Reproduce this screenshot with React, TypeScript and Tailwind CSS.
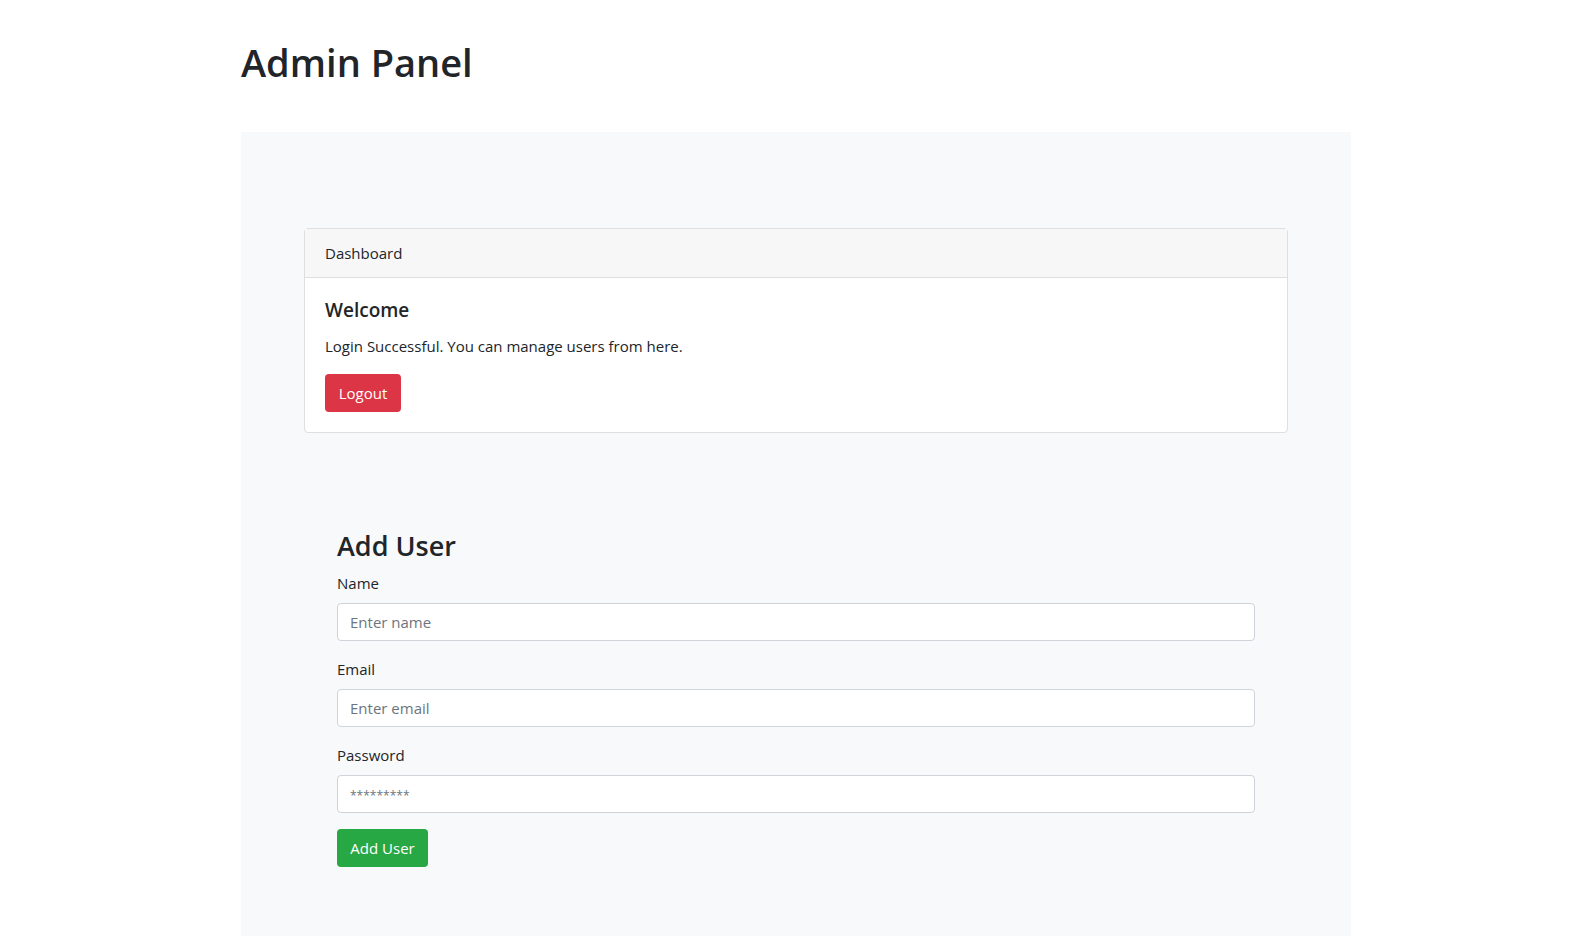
export default function App() {
  const inputCls =
    'h-[38px] w-full rounded border border-[#ced4da] bg-white px-3 text-[15px] text-[#495057] placeholder:text-[#6c757d]';

  return (
    <div className="min-h-screen bg-white text-[#212529] font-['Open_Sans',sans-serif]">
      <div className="ml-[241px] w-[1110px]">
        <h1 className="pt-[38px] pb-[46px] text-[38px] leading-[48px] font-semibold">Admin Panel</h1>
        <div className="bg-[#f8f9fa] pt-[96px] pb-[70px]">
          <div className="mx-[63px] rounded border border-[#dfdfdf] bg-white">
            <div className="border-b border-[#dfdfdf] bg-[#f7f7f7] px-5 py-3 text-[15px] leading-6">Dashboard</div>
            <div className="p-5">
              <h5 className="mb-3 text-[19px] leading-6 font-semibold">Welcome</h5>
              <p className="mb-4 text-[15px] leading-6">Login Successful. You can manage users from here.</p>
              <button className="h-[38px] w-[76px] rounded bg-[#dc3545] text-[15px] text-white">Logout</button>
            </div>
          </div>
          <form className="mx-[96px] mt-[96px]" onSubmit={(e) => e.preventDefault()}>
            <h2 className="mb-2 text-[27px] leading-[34px] font-semibold">Add User</h2>
            <div className="mb-4">
              <label className="mb-2 block text-[15px] leading-6">Name</label>
              <input type="text" placeholder="Enter name" className={inputCls} />
            </div>
            <div className="mb-4">
              <label className="mb-2 block text-[15px] leading-6">Email</label>
              <input type="email" placeholder="Enter email" className={inputCls} />
            </div>
            <div className="mb-4">
              <label className="mb-2 block text-[15px] leading-6">Password</label>
              <input
                type="password"
                placeholder="*********"
                className={inputCls + ' placeholder:text-[12px]'}
              />
            </div>
            <button type="submit" className="h-[38px] w-[91px] rounded bg-[#28a745] text-[15px] text-white">
              Add User
            </button>
          </form>
        </div>
      </div>
    </div>
  );
}
